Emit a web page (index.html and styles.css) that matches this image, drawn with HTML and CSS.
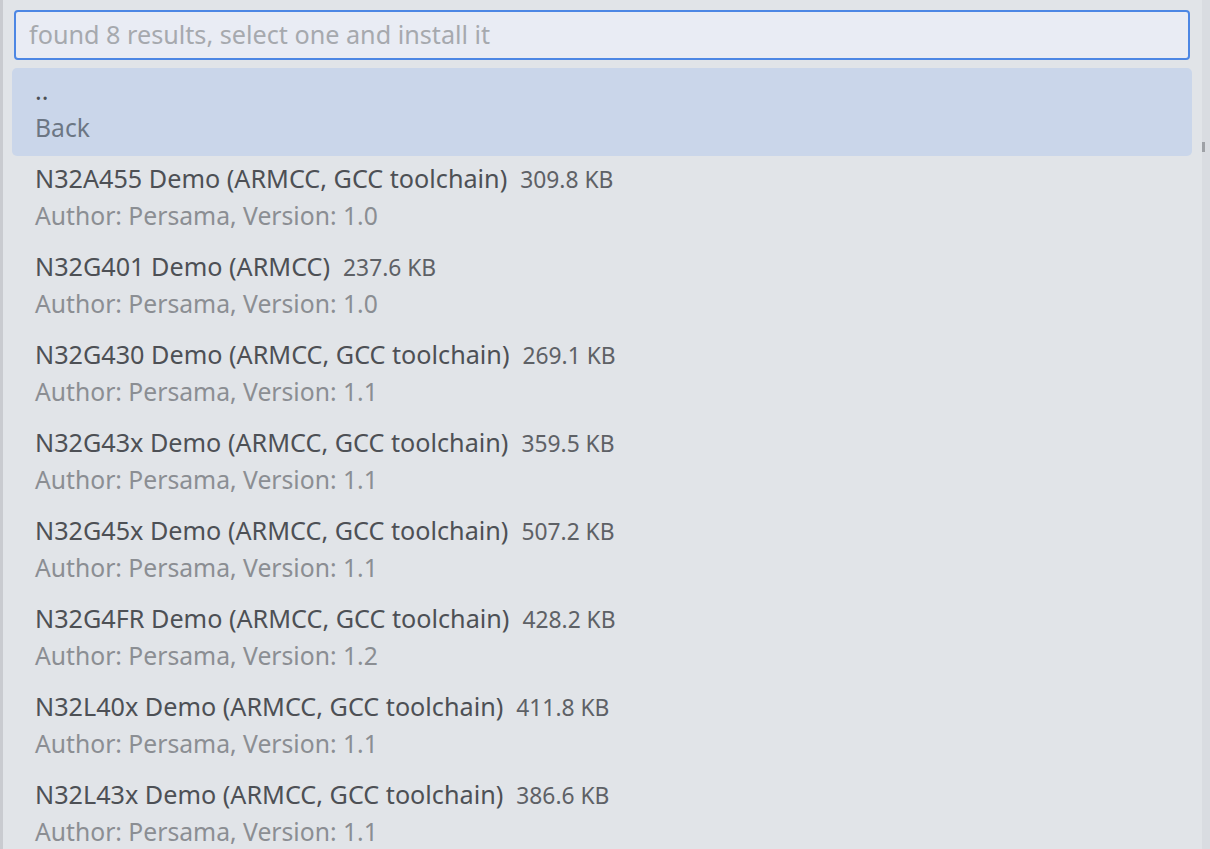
FILE: index.html
```html
<!DOCTYPE html>
<html>
<head>
<meta charset="utf-8">
<link rel="stylesheet" href="styles.css">
</head>
<body>
<div class="screen">
  <div class="edge-left"></div>
  <div class="panel">
    <div class="search">
      <input class="search-input" type="text" placeholder="found 8 results, select one and install it">
    </div>
    <div class="list">
      <div class="row row-active">
        <div class="line1"><span class="label">..</span></div>
        <div class="line2 back">Back</div>
      </div>
      <div class="row">
        <div class="line1"><span class="label">N32A455 Demo (ARMCC, GCC toolchain)</span><span class="size">309.8 KB</span></div>
        <div class="line2">Author: Persama, Version: 1.0</div>
      </div>
      <div class="row">
        <div class="line1"><span class="label">N32G401 Demo (ARMCC)</span><span class="size">237.6 KB</span></div>
        <div class="line2">Author: Persama, Version: 1.0</div>
      </div>
      <div class="row">
        <div class="line1"><span class="label">N32G430 Demo (ARMCC, GCC toolchain)</span><span class="size">269.1 KB</span></div>
        <div class="line2">Author: Persama, Version: 1.1</div>
      </div>
      <div class="row">
        <div class="line1"><span class="label">N32G43x Demo (ARMCC, GCC toolchain)</span><span class="size">359.5 KB</span></div>
        <div class="line2">Author: Persama, Version: 1.1</div>
      </div>
      <div class="row">
        <div class="line1"><span class="label">N32G45x Demo (ARMCC, GCC toolchain)</span><span class="size">507.2 KB</span></div>
        <div class="line2">Author: Persama, Version: 1.1</div>
      </div>
      <div class="row">
        <div class="line1"><span class="label">N32G4FR Demo (ARMCC, GCC toolchain)</span><span class="size">428.2 KB</span></div>
        <div class="line2">Author: Persama, Version: 1.2</div>
      </div>
      <div class="row">
        <div class="line1"><span class="label">N32L40x Demo (ARMCC, GCC toolchain)</span><span class="size">411.8 KB</span></div>
        <div class="line2">Author: Persama, Version: 1.1</div>
      </div>
      <div class="row">
        <div class="line1"><span class="label">N32L43x Demo (ARMCC, GCC toolchain)</span><span class="size">386.6 KB</span></div>
        <div class="line2">Author: Persama, Version: 1.1</div>
      </div>
    </div>
  </div>
  <div class="edge-right">
    <div class="edge-mark"></div>
  </div>
</div>
</body>
</html>
```

FILE: styles.css
```css
html, body {
  margin: 0;
  padding: 0;
  height: 100%;
  overflow: hidden;
  background: #dcdfe3;
  font-family: "Noto Sans", "Open Sans", sans-serif;
}

.screen {
  display: flex;
  height: 849px;
  width: 1210px;
  overflow: hidden;
}

.edge-left {
  width: 3px;
  flex: none;
  background: #c9cbd0;
}

.panel {
  width: 1199px;
  flex: none;
  background: #e1e4e8;
  display: flex;
  flex-direction: column;
  overflow: hidden;
}

.edge-right {
  flex: 1;
  background: #d9dce1;
  padding-top: 142px;
}

.edge-mark {
  width: 3px;
  height: 10px;
  background: #9ea1a6;
}

.search {
  padding: 10px 12px 0 11px;
}

.search-input {
  display: block;
  box-sizing: border-box;
  width: 100%;
  height: 50px;
  margin: 0;
  border: 2px solid #4d87e4;
  border-radius: 4px;
  background: #e9ecf4;
  padding: 0 0 2px 13px;
  font-family: inherit;
  font-size: 25.2px;
  color: #4b4e53;
  outline: none;
}

.search-input::placeholder {
  color: #a6a9ae;
}

.list {
  padding: 8px 10px 0 9px;
}

.row {
  box-sizing: border-box;
  height: 88px;
  padding: 3px 0 0 23px;
  border-radius: 5px;
}

.row-active {
  background: #cad6ea;
}

.line1, .line2 {
  height: 38px;
  line-height: 38px;
  white-space: nowrap;
}

.label {
  font-size: 25.2px;
  color: #4d5055;
}

.size {
  font-size: 22.8px;
  color: #5e6166;
  margin-left: 13px;
}

.line2 {
  font-size: 24.7px;
  color: #8b8e93;
}

.line2.back {
  color: #6c7684;
}
```
